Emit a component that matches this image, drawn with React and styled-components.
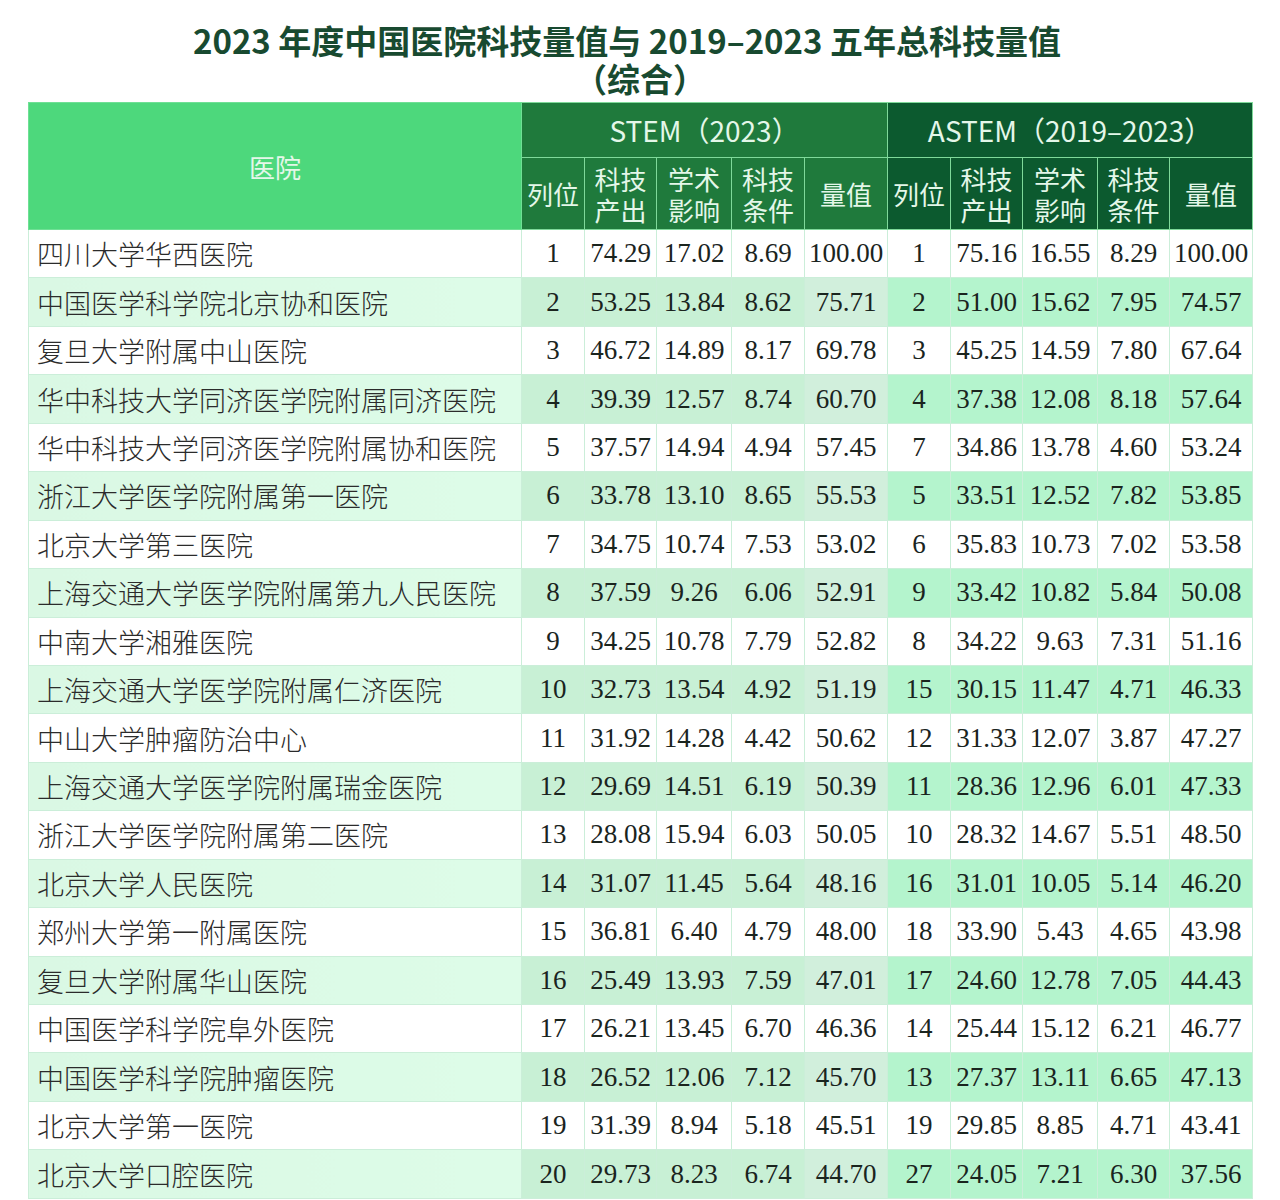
import React from 'react';
import styled, { createGlobalStyle } from 'styled-components';

const GlobalStyle = createGlobalStyle`
  body {
    margin: 0;
    background: #ffffff;
    font-family: "Noto Sans CJK SC", "Noto Sans", sans-serif;
  }
`;

const rows = [
  ['四川大学华西医院', ['1', '74.29', '17.02', '8.69', '100.00'], ['1', '75.16', '16.55', '8.29', '100.00']],
  ['中国医学科学院北京协和医院', ['2', '53.25', '13.84', '8.62', '75.71'], ['2', '51.00', '15.62', '7.95', '74.57']],
  ['复旦大学附属中山医院', ['3', '46.72', '14.89', '8.17', '69.78'], ['3', '45.25', '14.59', '7.80', '67.64']],
  ['华中科技大学同济医学院附属同济医院', ['4', '39.39', '12.57', '8.74', '60.70'], ['4', '37.38', '12.08', '8.18', '57.64']],
  ['华中科技大学同济医学院附属协和医院', ['5', '37.57', '14.94', '4.94', '57.45'], ['7', '34.86', '13.78', '4.60', '53.24']],
  ['浙江大学医学院附属第一医院', ['6', '33.78', '13.10', '8.65', '55.53'], ['5', '33.51', '12.52', '7.82', '53.85']],
  ['北京大学第三医院', ['7', '34.75', '10.74', '7.53', '53.02'], ['6', '35.83', '10.73', '7.02', '53.58']],
  ['上海交通大学医学院附属第九人民医院', ['8', '37.59', '9.26', '6.06', '52.91'], ['9', '33.42', '10.82', '5.84', '50.08']],
  ['中南大学湘雅医院', ['9', '34.25', '10.78', '7.79', '52.82'], ['8', '34.22', '9.63', '7.31', '51.16']],
  ['上海交通大学医学院附属仁济医院', ['10', '32.73', '13.54', '4.92', '51.19'], ['15', '30.15', '11.47', '4.71', '46.33']],
  ['中山大学肿瘤防治中心', ['11', '31.92', '14.28', '4.42', '50.62'], ['12', '31.33', '12.07', '3.87', '47.27']],
  ['上海交通大学医学院附属瑞金医院', ['12', '29.69', '14.51', '6.19', '50.39'], ['11', '28.36', '12.96', '6.01', '47.33']],
  ['浙江大学医学院附属第二医院', ['13', '28.08', '15.94', '6.03', '50.05'], ['10', '28.32', '14.67', '5.51', '48.50']],
  ['北京大学人民医院', ['14', '31.07', '11.45', '5.64', '48.16'], ['16', '31.01', '10.05', '5.14', '46.20']],
  ['郑州大学第一附属医院', ['15', '36.81', '6.40', '4.79', '48.00'], ['18', '33.90', '5.43', '4.65', '43.98']],
  ['复旦大学附属华山医院', ['16', '25.49', '13.93', '7.59', '47.01'], ['17', '24.60', '12.78', '7.05', '44.43']],
  ['中国医学科学院阜外医院', ['17', '26.21', '13.45', '6.70', '46.36'], ['14', '25.44', '15.12', '6.21', '46.77']],
  ['中国医学科学院肿瘤医院', ['18', '26.52', '12.06', '7.12', '45.70'], ['13', '27.37', '13.11', '6.65', '47.13']],
  ['北京大学第一医院', ['19', '31.39', '8.94', '5.18', '45.51'], ['19', '29.85', '8.85', '4.71', '43.41']],
  ['北京大学口腔医院', ['20', '29.73', '8.23', '6.74', '44.70'], ['27', '24.05', '7.21', '6.30', '37.56']],
];

const subHeads = [['列位'], ['科技', '产出'], ['学术', '影响'], ['科技', '条件'], ['量值']];
const colWidths = [493, 63, 72, 75, 73, 83, 63, 72, 75, 72, 83];

const headBg = { hosp: '#4dd87c', stem: '#1f7a3c', astem: '#0c5a2f' };

const stripeBg = {
  hosp: 'linear-gradient(90deg, #daf8e4 0%, #ddfce8 100%)',
  stem: '#c8f0d5',
  stemValue: '#d1efdc',
  astem: '#b4f4cd',
};

const Page = styled.div`
  padding: 21px 28px 0;
`;

const Title = styled.h1`
  margin: 0;
  text-align: center;
  font-family: "Noto Sans CJK SC", "Noto Sans", sans-serif;
  font-weight: 700;
  font-size: 33px;
  line-height: 38px;
  color: #184a30;
`;

const TitleLine = styled.span`
  display: block;
  padding-right: ${({ $shift }) => $shift || 0}px;
`;

const Table = styled.table`
  margin-top: 5px;
  width: 1224px;
  border-collapse: collapse;
  table-layout: fixed;
`;

const HeadCell = styled.th`
  background: ${({ $tone }) => headBg[$tone]};
  color: #e4f7e9;
  font-family: "Noto Sans CJK SC", "Noto Sans", sans-serif;
  font-weight: 400;
  font-size: ${({ $big }) => ($big ? '28px' : '26px')};
  line-height: 31px;
  text-align: center;
  vertical-align: middle;
  padding: 0;
  border: 1px solid ${({ $tone }) => ($tone === 'hosp' ? '#6fe095' : '#7fd99a')};
  height: ${({ $h }) => $h || 'auto'};
`;

const HeadLine = styled.span`
  display: block;
`;

const Row = styled.tr`
  height: 48.45px;
`;

const NameCell = styled.td`
  padding: 0 0 0 8px;
  font-family: "Liberation Serif", "Noto Sans CJK SC", serif;
  font-weight: 300;
  font-size: 27px;
  color: #2b2b2b;
  white-space: nowrap;
  overflow: hidden;
  border: 1px solid #cbeed9;
  background: ${({ $striped }) => ($striped ? stripeBg.hosp : '#ffffff')};
`;

const NumCell = styled.td`
  padding: 0;
  text-align: center;
  font-family: "Liberation Serif", "Times New Roman", serif;
  font-size: 27px;
  color: #1a241e;
  white-space: nowrap;
  border: 1px solid #cbeed9;
  background: ${({ $tone }) => ($tone ? stripeBg[$tone] : '#ffffff')};
`;

const tone = (striped, group, idx) => {
  if (!striped) return null;
  if (group === 'astem') return 'astem';
  return idx === 4 ? 'stemValue' : 'stem';
};

export default function App() {
  return (
    <Page>
      <GlobalStyle />
      <Title>
        <TitleLine $shift={26}>2023 年度中国医院科技量值与 2019–2023 五年总科技量值</TitleLine>
        <TitleLine>（综合）</TitleLine>
      </Title>
      <Table>
        <colgroup>
          {colWidths.map((w, i) => (
            <col key={i} style={{ width: w }} />
          ))}
        </colgroup>
        <thead>
          <tr>
            <HeadCell $tone="hosp" rowSpan={2}>医院</HeadCell>
            <HeadCell $tone="stem" colSpan={5} $big $h="54px">STEM（2023）</HeadCell>
            <HeadCell $tone="astem" colSpan={5} $big>ASTEM（2019–2023）</HeadCell>
          </tr>
          <tr>
            {['stem', 'astem'].map((g) =>
              subHeads.map((lines, i) => (
                <HeadCell key={g + i} $tone={g} $h="71px">
                  {lines.map((l) => (
                    <HeadLine key={l}>{l}</HeadLine>
                  ))}
                </HeadCell>
              ))
            )}
          </tr>
        </thead>
        <tbody>
          {rows.map(([name, stem, astem], r) => {
            const striped = r % 2 === 1;
            return (
              <Row key={name}>
                <NameCell $striped={striped}>{name}</NameCell>
                {stem.map((v, i) => (
                  <NumCell key={'s' + i} $tone={tone(striped, 'stem', i)}>{v}</NumCell>
                ))}
                {astem.map((v, i) => (
                  <NumCell key={'a' + i} $tone={tone(striped, 'astem', i)}>{v}</NumCell>
                ))}
              </Row>
            );
          })}
        </tbody>
      </Table>
    </Page>
  );
}
